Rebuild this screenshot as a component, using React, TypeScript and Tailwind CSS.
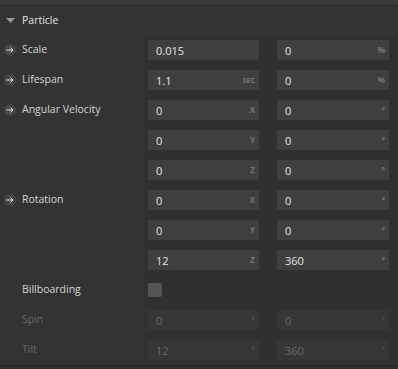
import React from 'react';

type Field = { value: string; unit?: string; unitSize?: 'sm' | 'xs' };

interface Row {
  label?: string;
  arrow?: boolean;
  fields?: [Field, Field];
  checkbox?: boolean;
  disabled?: boolean;
}

const rows: Row[] = [
  { label: 'Scale', arrow: true, fields: [{ value: '0.015' }, { value: '0', unit: '%' }] },
  { label: 'Lifespan', arrow: true, fields: [{ value: '1.1', unit: 'SEC', unitSize: 'xs' }, { value: '0', unit: '%' }] },
  { label: 'Angular Velocity', arrow: true, fields: [{ value: '0', unit: 'X' }, { value: '0', unit: '°' }] },
  { fields: [{ value: '0', unit: 'Y' }, { value: '0', unit: '°' }] },
  { fields: [{ value: '0', unit: 'Z' }, { value: '0', unit: '°' }] },
  { label: 'Rotation', arrow: true, fields: [{ value: '0', unit: 'X' }, { value: '0', unit: '°' }] },
  { fields: [{ value: '0', unit: 'Y' }, { value: '0', unit: '°' }] },
  { fields: [{ value: '12', unit: 'Z' }, { value: '360', unit: '°' }] },
  { label: 'Billboarding', checkbox: true },
  { label: 'Spin', disabled: true, fields: [{ value: '0', unit: '°' }, { value: '0', unit: '°' }] },
  { label: 'Tilt', disabled: true, fields: [{ value: '12', unit: '°' }, { value: '360', unit: '°' }] },
];

function ArrowBadge() {
  return (
    <span className="w-[12px] h-[12px] rounded-full bg-[#464646] flex items-center justify-center">
      <svg width="8" height="8" viewBox="0 0 8 8">
        <path d="M0.5 4H7M4.5 1.5L7 4L4.5 6.5" stroke="#e8e8e8" strokeWidth="1" fill="none" />
      </svg>
    </span>
  );
}

function Input({ field, disabled, wide }: { field: Field; disabled?: boolean; wide?: boolean }) {
  return (
    <div
      className={`h-[20px] flex items-center justify-between pl-2 pr-1 ${wide ? 'w-[112px]' : 'w-[111px]'} ${
        disabled ? 'bg-[#363636] text-[#686868]' : 'bg-[#3f3f3f] text-[#e6e6e6]'
      }`}
    >
      <span className="text-[11px] leading-none">{field.value}</span>
      {field.unit && (
        <span
          className={`font-bold leading-none ${field.unitSize === 'xs' ? 'text-[7px]' : 'text-[8px]'} ${
            disabled ? 'text-[#4f4f4f]' : 'text-[#777777]'
          }`}
        >
          {field.unit}
        </span>
      )}
    </div>
  );
}

export default function App() {
  return (
    <div className="w-[398px] h-[369px] bg-[#333333] overflow-hidden font-['Open_Sans',sans-serif] flex flex-col">
      <div className="h-[5px] bg-[#393939] border-b border-[#282828] box-content" />
      <div className="h-[29px] flex items-center pl-[6px] gap-[7px]">
        <svg width="9" height="6" viewBox="0 0 9 6">
          <path d="M0 0H9L4.5 5Z" fill="#9a9a9a" />
        </svg>
        <span className="text-[10.5px] text-[#e2e2e2]">Particle</span>
      </div>
      <div className="flex flex-col">
        {rows.map((row, i) => (
          <div key={i} className="flex h-[30px]">
            <div className="w-[144px] flex items-center">
              <div className="w-[22px] flex items-center justify-center pl-[2px] pr-[4px]">
                {row.arrow && <ArrowBadge />}
              </div>
              {row.label && (
                <span className={`text-[10.5px] ${row.disabled ? 'text-[#676767]' : 'text-[#d4d4d4]'}`}>
                  {row.label}
                </span>
              )}
            </div>
            <div className="flex-1 bg-[#303030] flex items-center pl-[4px] gap-[18px]">
              {row.fields && (
                <>
                  <Input field={row.fields[0]} disabled={row.disabled} />
                  <Input field={row.fields[1]} disabled={row.disabled} wide />
                </>
              )}
              {row.checkbox && <div className="w-[14px] h-[14px] rounded-[2px] bg-[#555555]" />}
            </div>
          </div>
        ))}
      </div>
      <div className="border-t border-[#272727] h-[2px] bg-[#2d2d2d]" />
      <div className="flex-1 bg-[#303030]" />
    </div>
  );
}
